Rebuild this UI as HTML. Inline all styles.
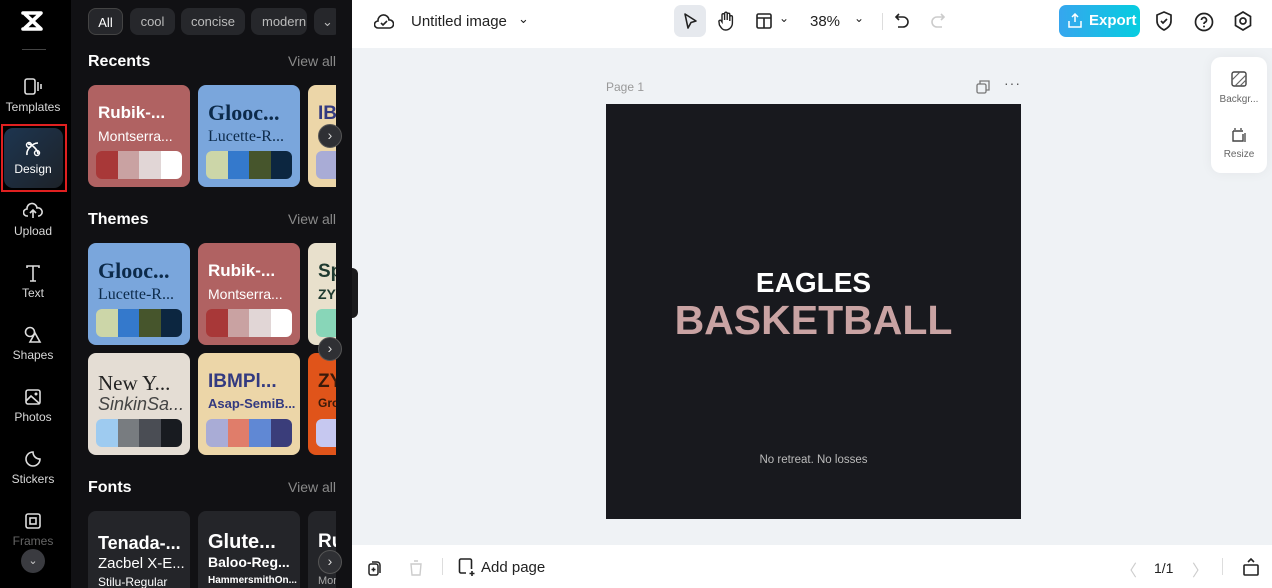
<!DOCTYPE html>
<html><head><meta charset="utf-8"><style>
*{margin:0;padding:0;box-sizing:border-box}
body{width:1272px;height:588px;overflow:hidden;font-family:"Liberation Sans",sans-serif;background:#eff2f5;position:relative}
.a{position:absolute}
.side{left:0;top:0;width:71px;height:588px;background:#000}
.nav{position:absolute;left:0;width:66px;text-align:center;color:#d8d8d8;font-size:12px}
.nav svg{display:block;margin:0 auto 4px}
.panel{left:71px;top:0;width:281px;height:588px;background:#111114;overflow:hidden}
.clip{position:absolute;left:0;top:0;width:265px;height:588px;overflow:hidden}
.chip{position:absolute;top:8px;height:27px;border-radius:8px;background:#26272b;color:#bbb;font-size:13px;line-height:27px;text-align:center}
.h{position:absolute;left:17px;color:#fff;font-weight:bold;font-size:16px}
.va{position:absolute;right:16px;color:#8a8a8a;font-size:14px}
.card{position:absolute;width:102px;height:102px;border-radius:8px;overflow:hidden}
.card .t1{position:absolute;left:10px;top:18px;font-size:19px;font-weight:bold;white-space:nowrap}
.card .t2{position:absolute;left:10px;top:43px;font-size:14px;white-space:nowrap}
.pal{position:absolute;left:8px;top:66px;width:86px;height:28px;border-radius:6px;overflow:hidden;display:flex}
.pal i{flex:1}
.arr{position:absolute;width:24px;height:24px;border-radius:12px;background:#2f3034;border:1px solid #555;color:#ddd;font-size:14px;line-height:21px;text-align:center}
.top{left:352px;top:0;width:920px;height:48px;background:#fff}
.bot{left:352px;top:545px;width:920px;height:43px;background:#fff}
</style></head><body>
<div class="a side">
 <svg class="a" style="left:20px;top:9px" width="26" height="24" viewBox="0 0 26 24"><path d="M3 4h18L5 19M3 20h18L5 5" fill="none" stroke="#fff" stroke-width="3.6" stroke-linejoin="round" stroke-linecap="round"/></svg>
 <div class="a" style="left:22px;top:49px;width:24px;height:1px;background:#444"></div>
 <div class="nav" style="top:78px"><svg width="20" height="18" viewBox="0 0 20 18"><rect x="2" y="1" width="10" height="15" rx="2" fill="none" stroke="#ddd" stroke-width="1.6"/><path d="M15 4v9M18 6v5" stroke="#ddd" stroke-width="1.6"/></svg>Templates</div>
 <div class="a" style="left:1px;top:124px;width:66px;height:68px;border:2px solid #e02020"></div>
 <div class="a" style="left:4px;top:128px;width:59px;height:60px;border-radius:9px;background:linear-gradient(135deg,#1d3550,#1d2228)"></div>
 <div class="nav" style="top:140px;color:#fff"><svg width="18" height="18" viewBox="0 0 18 18"><path d="M3 15C2 10 8 3 14 3M4 4c4 0 10 6 10 10" fill="none" stroke="#fff" stroke-width="1.6"/><circle cx="5" cy="5" r="2.5" fill="none" stroke="#fff" stroke-width="1.4"/><circle cx="13" cy="13" r="2.5" fill="none" stroke="#fff" stroke-width="1.4"/></svg>Design</div>
 <div class="nav" style="top:202px"><svg width="20" height="18" viewBox="0 0 20 18"><path d="M5 14H4a3.5 3.5 0 0 1 0-7 5 5 0 0 1 10-1 4 4 0 0 1 2 8h-1M10 8v8M7 11l3-3 3 3" fill="none" stroke="#ddd" stroke-width="1.6"/></svg>Upload</div>
 <div class="nav" style="top:264px"><svg width="18" height="18" viewBox="0 0 18 18"><path d="M3 4V2h12v2M9 2v15M6 17h6" fill="none" stroke="#ddd" stroke-width="1.6"/></svg>Text</div>
 <div class="nav" style="top:326px"><svg width="20" height="18" viewBox="0 0 20 18"><circle cx="7" cy="6" r="4.5" fill="none" stroke="#ddd" stroke-width="1.6"/><path d="M12 7l5 9H7z" fill="none" stroke="#ddd" stroke-width="1.6"/></svg>Shapes</div>
 <div class="nav" style="top:388px"><svg width="18" height="18" viewBox="0 0 18 18"><rect x="2" y="2" width="14" height="14" rx="2" fill="none" stroke="#ddd" stroke-width="1.6"/><path d="M2 13l5-5 9 8" fill="none" stroke="#ddd" stroke-width="1.6"/><circle cx="12" cy="6" r="1.5" fill="#ddd"/></svg>Photos</div>
 <div class="nav" style="top:450px"><svg width="18" height="18" viewBox="0 0 18 18"><path d="M16 9a7 7 0 1 1-7-7c0 4 3 7 7 7z" fill="none" stroke="#ddd" stroke-width="1.6"/></svg>Stickers</div>
 <div class="nav" style="top:512px;color:#666"><svg width="18" height="18" viewBox="0 0 18 18"><rect x="2" y="2" width="14" height="14" rx="2" fill="none" stroke="#ddd" stroke-width="1.6"/><rect x="6" y="6" width="6" height="6" fill="none" stroke="#ddd" stroke-width="1.6"/></svg>Frames</div>
 <div class="a" style="left:21px;top:549px;width:24px;height:24px;border-radius:12px;background:#3a3b40;color:#ccc;text-align:center;font-size:11px;line-height:24px">&#8964;</div>
</div>
<div class="a panel"><div class="clip">
 <div class="chip" style="left:17px;width:35px;border:1px solid #444;color:#fff">All</div>
 <div class="chip" style="left:59px;width:45px">cool</div>
 <div class="chip" style="left:110px;width:64px">concise</div>
 <div class="chip" style="left:180px;width:56px;overflow:hidden;text-align:left;padding-left:11px;white-space:nowrap">modern</div>
 <div class="chip" style="left:243px;width:27px">&#8964;</div>
 <div class="h" style="top:53px">Recents</div><div class="va" style="top:53px;right:0">View all</div>
 <div class="card" style="left:17px;top:85px;background:#b06262"><div class="t1" style="color:#fff;font-size:17px">Rubik-...</div><div class="t2" style="color:#fff">Montserra...</div><div class="pal"><i style="background:#a83838"></i><i style="background:#c9a2a2"></i><i style="background:#e1d6d6"></i><i style="background:#fff"></i></div></div>
 <div class="card" style="left:127px;top:85px;background:#7aa6dc"><div class="t1" style="color:#0c2a4a;font-family:'Liberation Serif',serif;font-size:22px;top:15px">Glooc...</div><div class="t2" style="color:#0c2a4a;font-family:'Liberation Serif',serif;font-size:16px">Lucette-R...</div><div class="pal"><i style="background:#ccd6a8"></i><i style="background:#3479cc"></i><i style="background:#46552c"></i><i style="background:#0c2640"></i></div></div>
 <div class="card" style="left:237px;top:85px;background:#ecd6a8"><div class="t1" style="color:#333a80">IB</div><div class="pal"><i style="background:#a9acd6"></i></div></div>
 <div class="h" style="top:211px">Themes</div><div class="va" style="top:211px;right:0">View all</div>
 <div class="card" style="left:17px;top:243px;background:#7aa6dc"><div class="t1" style="color:#0c2a4a;font-family:'Liberation Serif',serif;font-size:22px;top:15px">Glooc...</div><div class="t2" style="color:#0c2a4a;font-family:'Liberation Serif',serif;font-size:16px">Lucette-R...</div><div class="pal"><i style="background:#ccd6a8"></i><i style="background:#3479cc"></i><i style="background:#46552c"></i><i style="background:#0c2640"></i></div></div>
 <div class="card" style="left:127px;top:243px;background:#b06262"><div class="t1" style="color:#fff;font-size:17px">Rubik-...</div><div class="t2" style="color:#fff">Montserra...</div><div class="pal"><i style="background:#a83838"></i><i style="background:#c9a2a2"></i><i style="background:#e1d6d6"></i><i style="background:#fff"></i></div></div>
 <div class="card" style="left:237px;top:243px;background:#e8e0cc"><div class="t1" style="color:#1f3a30">Sp</div><div class="t2" style="color:#1f3a30;font-weight:bold">ZY</div><div class="pal"><i style="background:#88d6b8"></i></div></div>
 <div class="card" style="left:17px;top:353px;background:#e4ddd4"><div class="t1" style="color:#222;font-family:'Liberation Serif',serif;font-weight:normal;font-size:21px">New Y...</div><div class="t2" style="color:#444;font-style:italic;font-size:18px;top:41px">SinkinSa...</div><div class="pal"><i style="background:#9ecbf0"></i><i style="background:#787c80"></i><i style="background:#4a4d54"></i><i style="background:#181b20"></i></div></div>
 <div class="card" style="left:127px;top:353px;background:#ecd6a8"><div class="t1" style="color:#333a80">IBMPl...</div><div class="t2" style="color:#333a80;font-weight:bold;font-size:13px">Asap-SemiB...</div><div class="pal"><i style="background:#a9acd6"></i><i style="background:#e07d6a"></i><i style="background:#6088d4"></i><i style="background:#3a3d7a"></i></div></div>
 <div class="card" style="left:237px;top:353px;background:#e0541a"><div class="t1" style="color:#3a1a0a">ZY</div><div class="t2" style="color:#3a1a0a;font-weight:bold;font-size:12px">Gro</div><div class="pal"><i style="background:#c6c8f0"></i></div></div>
 <div class="h" style="top:479px">Fonts</div><div class="va" style="top:479px;right:0">View all</div>
 <div class="card" style="left:17px;top:511px;background:#242529;color:#fff"><div class="t1" style="top:22px;font-size:18px">Tenada-...</div><div class="t2" style="top:44px;font-size:15px">Zacbel X-E...</div><div class="t2" style="top:64px;font-size:12px">Stilu-Regular</div></div>
 <div class="card" style="left:127px;top:511px;background:#242529;color:#fff"><div class="t1" style="top:20px;font-size:20px">Glute...</div><div class="t2" style="top:43px;font-weight:bold">Baloo-Reg...</div><div class="t2" style="top:64px;font-size:10px;font-weight:bold">HammersmithOn...</div></div>
 <div class="card" style="left:237px;top:511px;background:#242529;color:#fff"><div class="t1" style="top:20px">Ru</div><div class="t2" style="top:64px;font-size:11px;color:#aaa">Mor</div></div>
</div>
 <div class="arr" style="left:247px;top:124px">&#8250;</div>
 <div class="arr" style="left:247px;top:337px">&#8250;</div>
 <div class="arr" style="left:247px;top:550px">&#8250;</div>
</div>
<div class="a" style="left:352px;top:268px;width:6px;height:50px;background:#1a1a1c;border-radius:0 6px 6px 0"></div>
<div class="a top">
 <svg class="a" style="left:22px;top:12px" width="20" height="18" viewBox="0 0 20 18"><path d="M5 16H4a3.5 3.5 0 0 1 0-7 5.5 5.5 0 0 1 11-1 4 4 0 0 1 1 8z" fill="none" stroke="#222" stroke-width="1.6"/><path d="M7 11l2 2 4-4" fill="none" stroke="#222" stroke-width="1.6"/></svg>
 <div class="a" style="left:59px;top:13px;font-size:15px;color:#222">Untitled image</div>
 <div class="a" style="left:166px;top:11px;font-size:13px;color:#222">&#8964;</div>
 <div class="a" style="left:322px;top:5px;width:32px;height:32px;border-radius:7px;background:#e6e9ee"></div>
 <svg class="a" style="left:330px;top:12px" width="16" height="18" viewBox="0 0 16 18"><path d="M3 2l11 7-5 1.5L6 16z" fill="none" stroke="#222" stroke-width="1.6" stroke-linejoin="round"/></svg>
 <svg class="a" style="left:366px;top:11px" width="16" height="20" viewBox="0 0 16 20"><path d="M4 11V4a1.3 1.3 0 0 1 2.6 0v5V2.5a1.3 1.3 0 0 1 2.6 0V9V3.5a1.3 1.3 0 0 1 2.6 0V10V6a1.3 1.3 0 0 1 2.6 0v6a7 7 0 0 1-7 7c-3 0-4-2-6-5L1 11a1.3 1.3 0 0 1 2-1.5L4 11z" fill="none" stroke="#222" stroke-width="1.4"/></svg>
 <svg class="a" style="left:404px;top:13px" width="16" height="16" viewBox="0 0 16 16"><rect x="1" y="1" width="14" height="14" rx="1.5" fill="none" stroke="#222" stroke-width="1.6"/><path d="M1 5h14M8 5v10" stroke="#222" stroke-width="1.6"/></svg>
 <div class="a" style="left:427px;top:11px;font-size:12px;color:#222">&#8964;</div>
 <div class="a" style="left:458px;top:13px;font-size:15px;color:#222">38%</div>
 <div class="a" style="left:502px;top:11px;font-size:12px;color:#222">&#8964;</div>
 <div class="a" style="left:530px;top:13px;width:1px;height:17px;background:#ddd"></div>
 <svg class="a" style="left:542px;top:12px" width="16" height="18" viewBox="0 0 16 18"><path d="M5 2L2 5l3 3M2 5h7a5 5 0 0 1 0 10H4" fill="none" stroke="#222" stroke-width="1.6"/></svg>
 <svg class="a" style="left:578px;top:12px" width="16" height="18" viewBox="0 0 16 18"><path d="M11 2l3 3-3 3M14 5H7a5 5 0 0 0 0 10h5" fill="none" stroke="#ccc" stroke-width="1.6"/></svg>
 <div class="a" style="left:707px;top:5px;width:81px;height:32px;border-radius:7px;background:linear-gradient(90deg,#36a6ee,#06cde0);color:#fff;font-weight:bold;font-size:15px;line-height:32px;padding-left:30px">Export</div>
 <svg class="a" style="left:716px;top:13px" width="14" height="15" viewBox="0 0 14 15"><path d="M7 9V1M4 4l3-3 3 3M1 8v6h12V8" fill="none" stroke="#fff" stroke-width="1.5"/></svg>
 <svg class="a" style="left:803px;top:11px" width="18" height="20" viewBox="0 0 18 20"><path d="M9 1l7 3v6c0 4-3 7-7 9-4-2-7-5-7-9V4z" fill="none" stroke="#222" stroke-width="1.7"/><path d="M6 10l2 2 4-4" fill="none" stroke="#222" stroke-width="1.7"/></svg>
 <svg class="a" style="left:842px;top:12px" width="20" height="20" viewBox="0 0 20 20"><circle cx="10" cy="10" r="8.5" fill="none" stroke="#222" stroke-width="1.7"/><path d="M7.5 8a2.5 2.5 0 1 1 3.5 2.3c-.8.4-1 1-1 1.7" fill="none" stroke="#222" stroke-width="1.7"/><circle cx="10" cy="14.5" r="1" fill="#222"/></svg>
 <svg class="a" style="left:882px;top:11px" width="18" height="20" viewBox="0 0 18 20"><path d="M9 1l7.5 4.5v9L9 19l-7.5-4.5v-9z" fill="none" stroke="#222" stroke-width="1.7"/><circle cx="9" cy="10" r="3" fill="none" stroke="#222" stroke-width="1.7"/></svg>
</div>
<div class="a" style="left:606px;top:80px;font-size:12px;color:#999">Page 1</div>
<svg class="a" style="left:976px;top:80px" width="14" height="14" viewBox="0 0 14 14"><rect x="1" y="4" width="9" height="9" rx="1.5" fill="none" stroke="#777" stroke-width="1.3"/><path d="M4 4V1h9v9h-3" fill="none" stroke="#777" stroke-width="1.3"/></svg>
<div class="a" style="left:1004px;top:75px;font-size:14px;color:#555;letter-spacing:1px">···</div>
<div class="a" style="left:606px;top:104px;width:415px;height:415px;background:#18191e">
 <div class="a" style="left:0;width:415px;top:163px;text-align:center;color:#fff;font-weight:bold;font-size:28px">EAGLES</div>
 <div class="a" style="left:0;width:415px;top:193px;text-align:center;color:#c9a3a3;font-weight:bold;font-size:41px">BASKETBALL</div>
 <div class="a" style="left:0;width:415px;top:350px;text-align:center;color:#bbb;font-size:11.5px">No retreat. No losses</div>
</div>
<div class="a" style="left:1211px;top:57px;width:56px;height:116px;background:#fff;border-radius:10px;box-shadow:0 0 12px rgba(0,0,0,.05)">
 <svg class="a" style="left:20px;top:14px" width="16" height="16" viewBox="0 0 16 16"><rect x="1" y="1" width="14" height="14" rx="2" fill="none" stroke="#444" stroke-width="1.4"/><path d="M1 9l8-8M4 15l11-11M9 15l6-6" stroke="#666" stroke-width="1.2"/></svg>
 <div class="a" style="left:0;width:56px;top:37px;text-align:center;font-size:10px;color:#666">Backgr...</div>
 <svg class="a" style="left:20px;top:70px" width="16" height="16" viewBox="0 0 16 16"><path d="M2 4h10M2 4v10h10V7" fill="none" stroke="#444" stroke-width="1.4"/><path d="M4 1v2M10 1v2M14 6v9" stroke="#444" stroke-width="1.3"/></svg>
 <div class="a" style="left:0;width:56px;top:92px;text-align:center;font-size:10px;color:#666">Resize</div>
</div>
<div class="a bot">
 <svg class="a" style="left:16px;top:15px" width="14" height="16" viewBox="0 0 14 16"><rect x="1" y="4" width="9" height="11" rx="2" fill="none" stroke="#222" stroke-width="1.5"/><path d="M4 2h5a3 3 0 0 1 3 3v8M5.5 7.5v4M3.5 9.5h4" fill="none" stroke="#222" stroke-width="1.5"/></svg>
 <svg class="a" style="left:57px;top:15px" width="14" height="16" viewBox="0 0 14 16"><path d="M2 4h10l-1 11H3zM5 1h4" fill="none" stroke="#ccc" stroke-width="1.4"/></svg>
 <div class="a" style="left:90px;top:13px;width:1px;height:17px;background:#ddd"></div>
 <svg class="a" style="left:106px;top:13px" width="18" height="19" viewBox="0 0 18 19"><path d="M8 15H3a1.5 1.5 0 0 1-1.5-1.5v-11A1.5 1.5 0 0 1 3 1h9a1.5 1.5 0 0 1 1.5 1.5V11M14 13v5M11.5 15.5h5" fill="none" stroke="#222" stroke-width="1.6"/></svg>
 <div class="a" style="left:129px;top:14px;font-size:15px;color:#222">Add page</div>
 <div class="a" style="left:769px;top:12px;font-size:16px;color:#ccc">&#12296;</div>
 <div class="a" style="left:802px;top:15px;font-size:14px;color:#222">1/1</div>
 <div class="a" style="left:840px;top:12px;font-size:16px;color:#ccc">&#12297;</div>
 <div class="a" style="left:870px;top:13px;width:1px;height:17px;background:#ddd"></div>
 <svg class="a" style="left:890px;top:13px" width="18" height="18" viewBox="0 0 18 18"><rect x="2" y="7" width="14" height="10" rx="1" fill="none" stroke="#222" stroke-width="1.6"/><path d="M6 4l3-3 3 3" fill="none" stroke="#222" stroke-width="1.6"/></svg>
</div>
</body></html>
